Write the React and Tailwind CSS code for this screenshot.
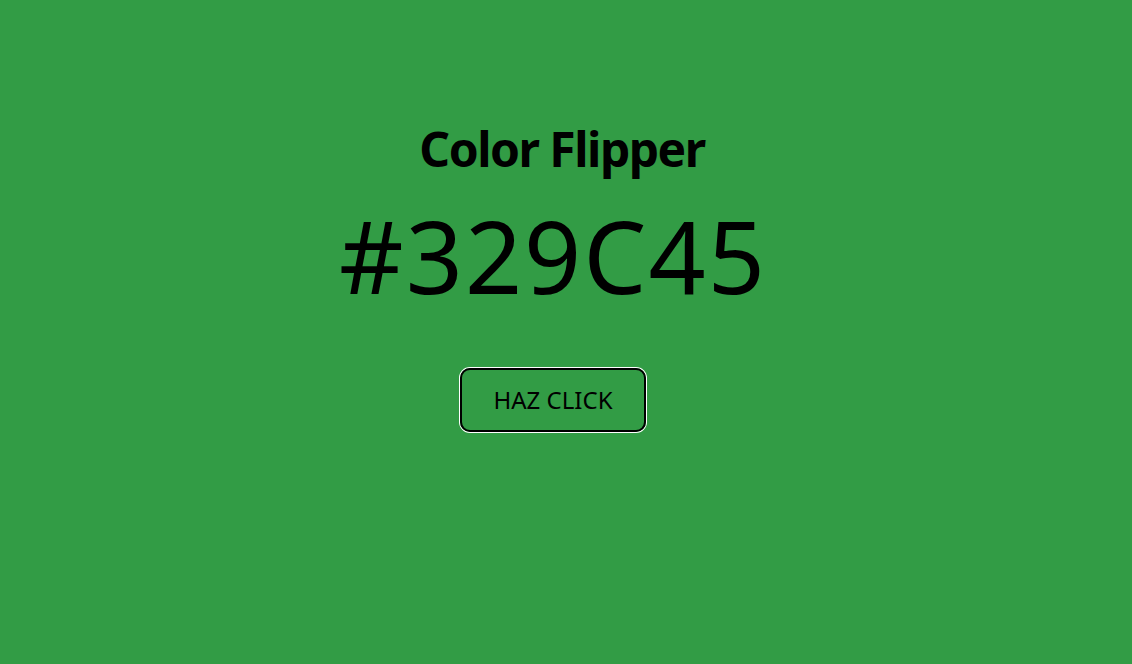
export default function App() {
  return (
    <div className="w-full min-h-screen h-[664px] bg-[#329C45] flex flex-col items-center pt-[111px] pr-[26px] font-['Noto_Sans',sans-serif] text-black">
      <h1 className="ml-[18px] text-[48px] font-bold leading-[76px] tracking-[-1.5px]">Color Flipper</h1>
      <div className="text-[100px] leading-[120px] mt-[8px] tracking-[2px]">#329C45</div>
      <button className="mt-[53px] w-[186px] h-[64px] rounded-[10px] border-2 border-black ring-1 ring-white text-[24px] cursor-pointer">
        HAZ CLICK
      </button>
    </div>
  );
}
